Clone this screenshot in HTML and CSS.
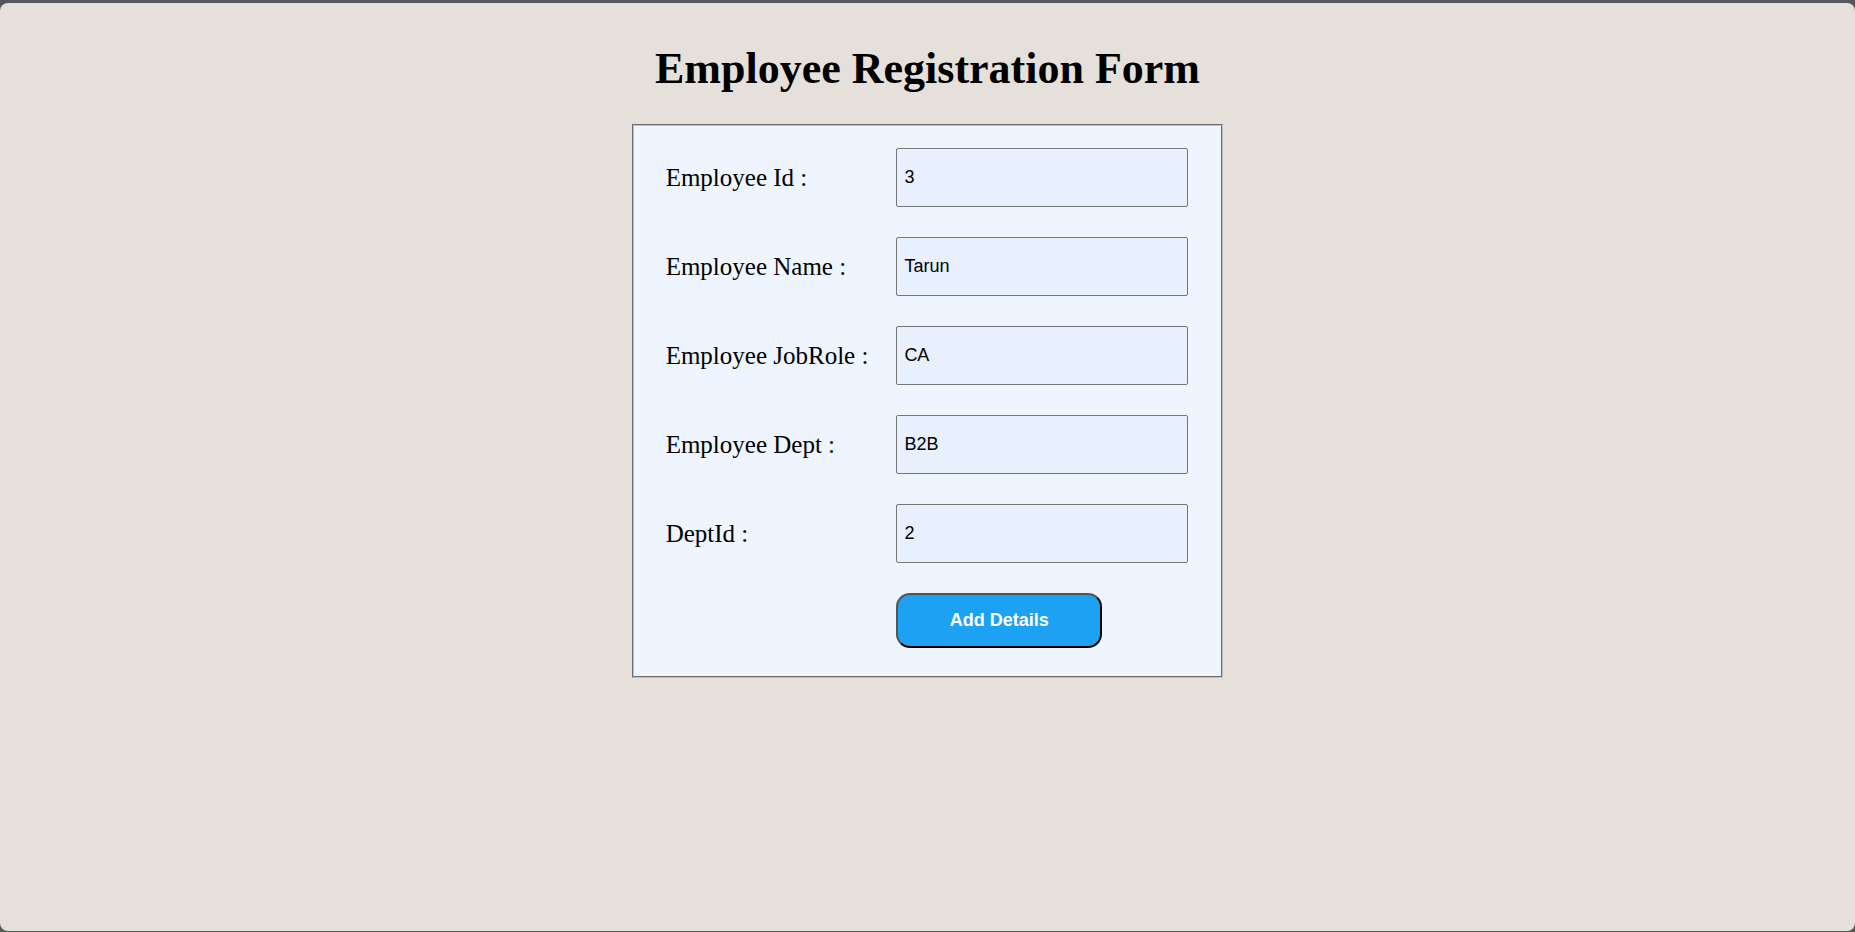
FILE: index.html
```html
<!DOCTYPE html>
<html lang="en">
<head>
<meta charset="utf-8">
<title>Employee Registration Form</title>
<link rel="stylesheet" href="styles.css">
</head>
<body>
<main class="page">
  <h1 class="title">Employee Registration Form</h1>
  <form class="form">
    <label class="label" for="emp-id">Employee Id :</label>
    <input class="field" id="emp-id" type="text" value="3">
    <label class="label" for="emp-name">Employee Name :</label>
    <input class="field" id="emp-name" type="text" value="Tarun">
    <label class="label" for="emp-role">Employee JobRole :</label>
    <input class="field" id="emp-role" type="text" value="CA">
    <label class="label" for="emp-dept">Employee Dept :</label>
    <input class="field" id="emp-dept" type="text" value="B2B">
    <label class="label" for="dept-id">DeptId :</label>
    <input class="field" id="dept-id" type="text" value="2">
    <button class="submit" type="button">Add Details</button>
  </form>
</main>
</body>
</html>
```
FILE: styles.css
```css
* {
  box-sizing: border-box;
}

body {
  margin: 0;
  padding: 3px 0 1px;
  min-height: 100vh;
  display: flex;
  background: #56565c;
  color: #000;
  font-family: "Liberation Serif", "Times New Roman", serif;
}

.page {
  flex: 1;
  display: flex;
  flex-direction: column;
  align-items: center;
  padding: 40px 16px 32px;
  border-radius: 8px;
  background: #e5e0da;
}

.title {
  margin: 0 0 29px;
  font-size: 44px;
  line-height: 52px;
  font-weight: bold;
  text-align: center;
}

.form {
  display: grid;
  grid-template-columns: max-content 292px;
  gap: 30px 28px;
  align-items: center;
  padding: 22px 33px 28px 32px;
  border: 2px groove #c0c0c0;
  background: #eef5ff;
}

.label {
  font-size: 25px;
}

.field {
  width: 100%;
  height: 59px;
  padding: 0 7px;
  border: 1px solid #767676;
  border-radius: 2px;
  background: #e8effd;
  color: #000;
  font-family: "Liberation Sans", Arial, sans-serif;
  font-size: 18px;
}

.submit {
  grid-column: 2;
  justify-self: start;
  width: 206px;
  height: 55px;
  border: 2px outset #000;
  border-radius: 14px;
  background: #1da1f2;
  color: #fff;
  font-family: "Liberation Sans", Arial, sans-serif;
  font-size: 18px;
  font-weight: bold;
}
```
